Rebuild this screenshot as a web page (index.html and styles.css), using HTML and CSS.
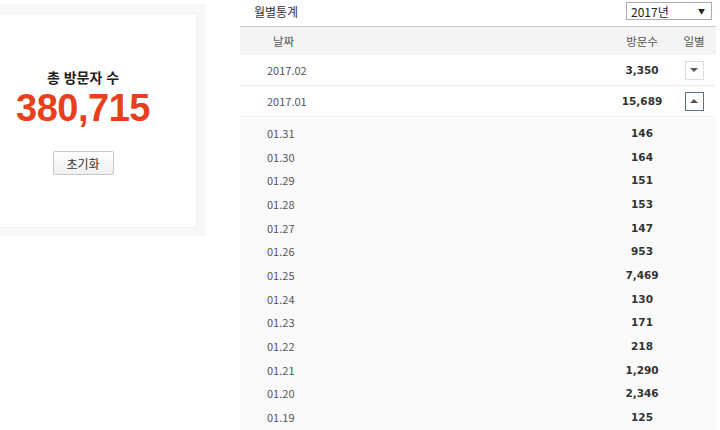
FILE: index.html
```html
<!DOCTYPE html>
<html lang="ko">
<head>
    <meta charset="UTF-8">
    <title>방문자 통계</title>
    <link rel="stylesheet" href="styles.css">
</head>
<body>

<!-- Total visitors -->
<div class="summary">
    <div class="summary-card">
        <div class="summary-label">총 방문자 수</div>
        <div class="summary-count">380,715</div>
        <button class="reset-button">초기화</button>
    </div>
</div>

<!-- Monthly stats -->
<div class="stats">
    <div class="stats-head">
        <h2 class="stats-title">월별통계</h2>
        <div class="year-select">
            <span>2017년</span>
            <span class="year-arrow">&#9660;</span>
        </div>
    </div>

    <div class="row row-header">
        <div class="col-date">날짜</div>
        <div class="col-count">방문수</div>
        <div class="col-daily">일별</div>
    </div>

    <div class="row row-month">
        <div class="col-date">2017.02</div>
        <div class="col-count">3,350</div>
        <div class="col-daily"><span class="toggle"><i class="tri down"></i></span></div>
    </div>

    <div class="row row-month">
        <div class="col-date">2017.01</div>
        <div class="col-count">15,689</div>
        <div class="col-daily"><span class="toggle active"><i class="tri up"></i></span></div>
    </div>

    <div class="daily-list" id="daily-list"></div>
</div>

<script>
    const days = [
        ['01.31', '146'], ['01.30', '164'], ['01.29', '151'], ['01.28', '153'],
        ['01.27', '147'], ['01.26', '953'], ['01.25', '7,469'], ['01.24', '130'],
        ['01.23', '171'], ['01.22', '218'], ['01.21', '1,290'], ['01.20', '2,346'],
        ['01.19', '125']
    ];

    const list = document.getElementById('daily-list');
    days.forEach(function (d) {
        const row = document.createElement('div');
        row.className = 'row row-day';
        row.innerHTML = '<div class="col-date">' + d[0] + '</div>' +
            '<div class="col-count">' + d[1] + '</div><div class="col-daily"></div>';
        list.appendChild(row);
    });
</script>

</body>
</html>
```

FILE: styles.css
```css
body {
    margin: 0;
    background-color: #fff;
    font-family: "Noto Sans CJK KR", "Liberation Sans", sans-serif;
    color: #333;
    display: flex;
    align-items: flex-start;
    height: 430px;
    overflow: hidden;
}

/* left card */
.summary {
    margin: 4px 0 0 -40px;
    width: 246px;
    height: 232px;
    padding: 9px 9px 8px 9px;
    box-sizing: border-box;
    background-color: #f7f7f7;
    flex-shrink: 0;
}

.summary-card {
    height: 100%;
    background-color: #fff;
    border: 1px solid #efefef;
    box-sizing: border-box;
    display: flex;
    flex-direction: column;
    align-items: center;
    padding-top: 53px;
}

.summary-label {
    font-size: 14px;
    font-weight: bold;
    color: #222;
    line-height: 20px;
}

.summary-count {
    font-family: "Liberation Sans", Arial, sans-serif;
    font-size: 38px;
    font-weight: bold;
    color: #e8401c;
    letter-spacing: -0.5px;
    line-height: 40px;
    margin-top: 1px;
}

.reset-button {
    margin-top: 23px;
    width: 61px;
    height: 24px;
    border: 1px solid #c8c8c8;
    border-radius: 2px;
    background: linear-gradient(#fff, #efefef);
    font-family: "Noto Sans CJK KR", sans-serif;
    font-size: 12px;
    color: #333;
    padding: 0;
}

/* right panel */
.stats {
    margin-left: 34px;
    width: 476px;
    flex-shrink: 0;
}

.stats-head {
    display: flex;
    justify-content: space-between;
    align-items: center;
    height: 26px;
    padding-left: 14px;
    padding-right: 4px;
}

.stats-title {
    margin: -4px 0 0 0;
    font-size: 12px;
    font-weight: normal;
    color: #333;
}

.year-select {
    width: 86px;
    height: 18px;
    border: 1px solid #aaa;
    box-sizing: border-box;
    display: flex;
    justify-content: space-between;
    align-items: center;
    padding: 0 6px 0 4px;
    font-size: 12px;
    color: #222;
    margin-top: -4px;
}

.year-arrow {
    font-size: 7px;
}

.row {
    display: grid;
    grid-template-columns: 1fr 60px 44px;
    align-items: center;
}

.col-date {
    padding-left: 27px;
}

.col-count,
.col-daily {
    text-align: center;
}

.row-header {
    height: 28px;
    border-top: 1px solid #ccc;
    background-color: #f4f4f4;
    font-size: 11.5px;
    color: #555;
}

.row-header .col-date {
    padding-left: 33px;
}

.row-month {
    height: 30px;
    border-bottom: 1px solid #eee;
    font-size: 11px;
    color: #555;
}

.row-month .col-count,
.row-day .col-count {
    font-family: "DejaVu Sans", Verdana, sans-serif;
    font-size: 10.5px;
    font-weight: bold;
    color: #333;
}

.toggle {
    display: inline-flex;
    width: 19px;
    height: 19px;
    box-sizing: border-box;
    border: 1px solid #ddd;
    background-color: #fff;
    align-items: center;
    justify-content: center;
    vertical-align: middle;
}

.toggle.active {
    border-color: #5b7093;
}

.tri {
    width: 0;
    height: 0;
    border-left: 4px solid transparent;
    border-right: 4px solid transparent;
}

.tri.down {
    border-top: 4px solid #555;
}

.tri.up {
    border-bottom: 4px solid #555;
}

.daily-list {
    background-color: #fafafa;
    margin-top: 1px;
    padding-top: 3px;
    height: 320px;
}

.row-day {
    height: 23.7px;
    font-size: 11px;
    color: #555;
}
```
